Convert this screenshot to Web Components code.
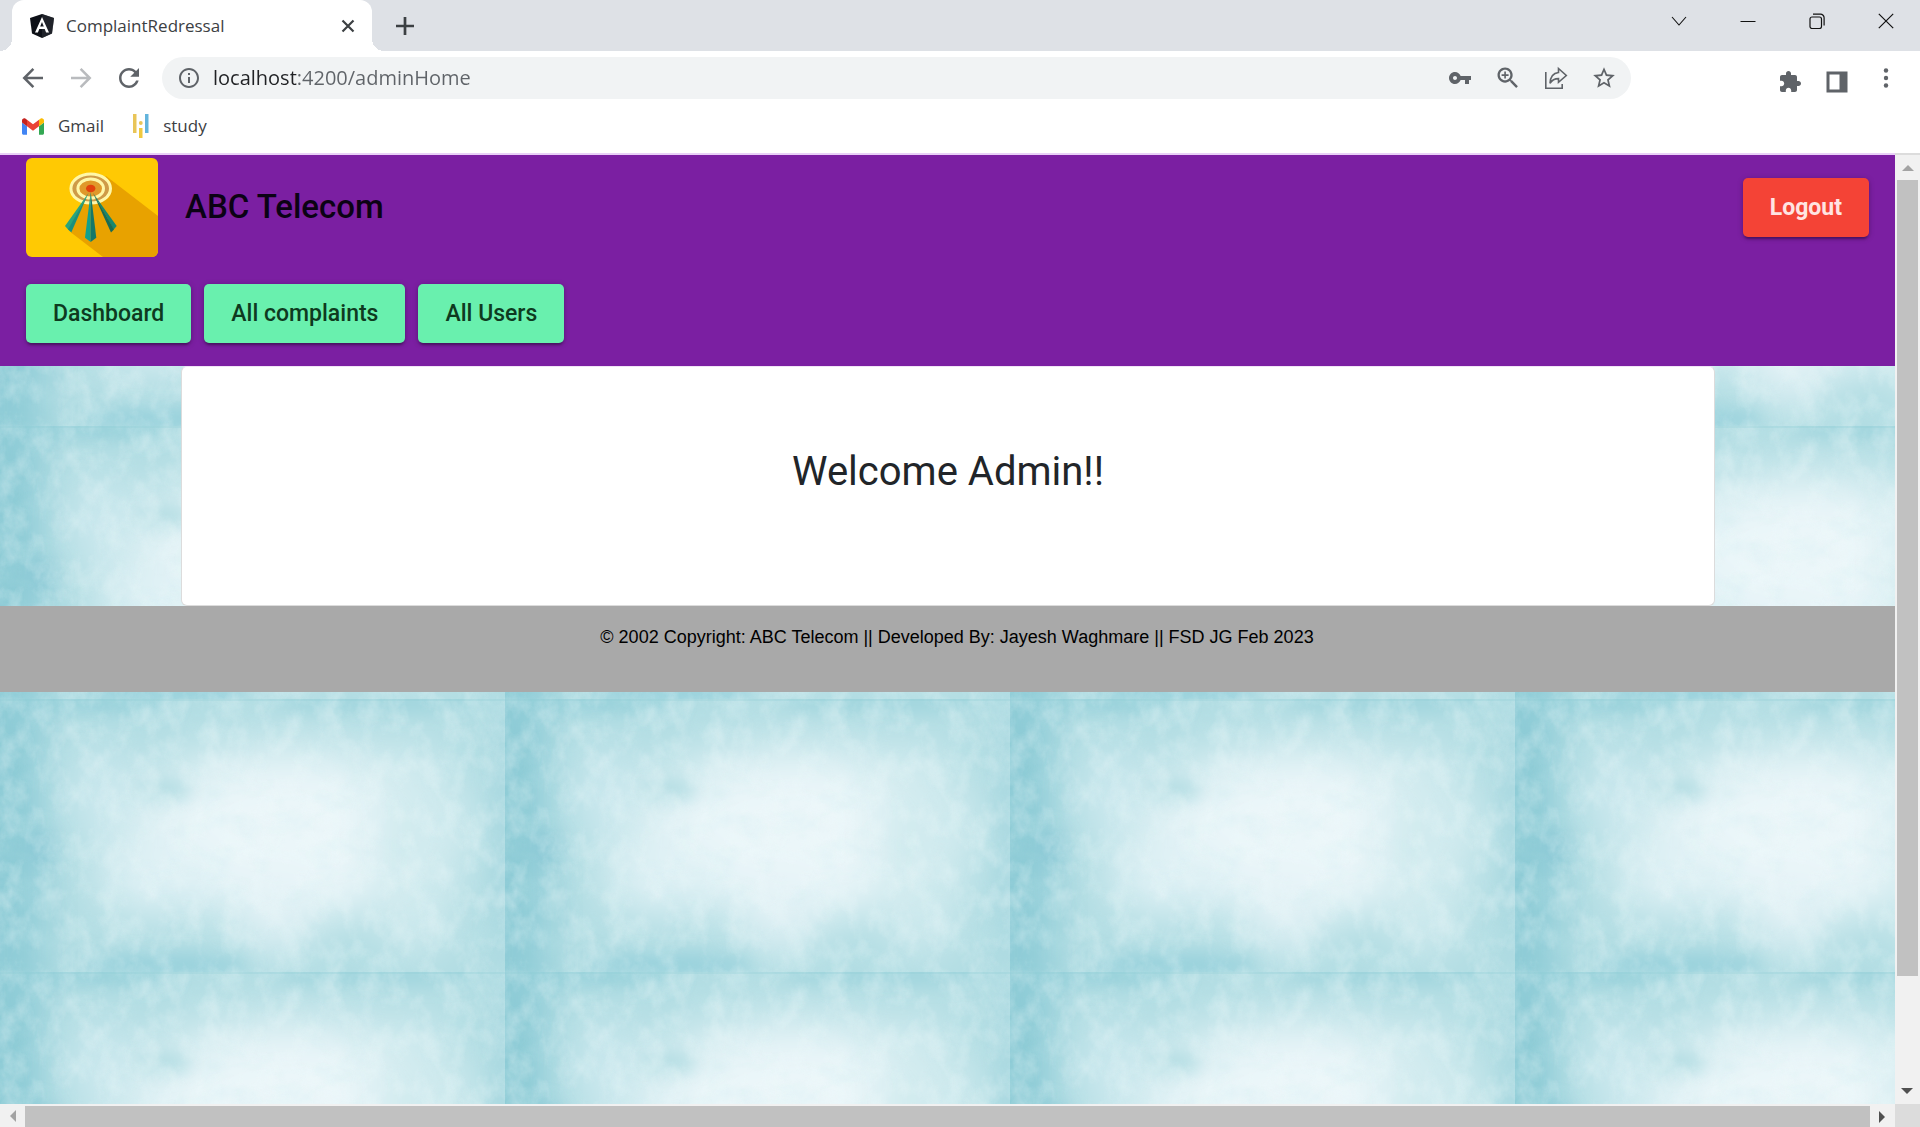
<!DOCTYPE html>
<html lang="en">
<head>
<meta charset="utf-8">
<title>ComplaintRedressal</title>
<style>
  html, body { margin: 0; height: 100%; }
  body { font-family: "Open Sans", "Noto Sans", sans-serif; color: #3c4043; overflow: hidden; }
</style>
</head>
<body>
<browser-window>
  <tab-strip slot="tabs"></tab-strip>
  <nav-toolbar slot="toolbar"></nav-toolbar>
  <bookmark-bar slot="bookmarks"></bookmark-bar>
  <telecom-app slot="page">
    <app-header slot="header"></app-header>
    <welcome-card>Welcome Admin!!</welcome-card>
    <app-footer slot="footer">© 2002 Copyright: ABC Telecom || Developed By: Jayesh Waghmare || FSD JG Feb 2023</app-footer>
  </telecom-app>
</browser-window>

<script>
const define = (name, html) => {
  const template = document.createElement('template');
  template.innerHTML = html;
  customElements.define(name, class extends HTMLElement {
    constructor() {
      super();
      this.attachShadow({ mode: 'open' }).append(template.content.cloneNode(true));
    }
  });
};

const resetButton = `
  button { all: unset; box-sizing: border-box; display: grid; place-content: center; cursor: pointer; }
  svg { display: block; }
`;

define('browser-window', `
  <style>
    :host { display: flex; flex-direction: column; height: 100vh; background: #fff; }
    main { flex: 1; min-height: 0; display: grid; grid-template-columns: minmax(0, 1fr) 25px; grid-template-rows: minmax(0, 1fr) 23px; }
    .corner { background: #dcdcdc; }
  </style>
  <slot name="tabs"></slot>
  <slot name="toolbar"></slot>
  <slot name="bookmarks"></slot>
  <main>
    <slot name="page"></slot>
    <scroll-bar class="vertical"></scroll-bar>
    <scroll-bar class="horizontal"></scroll-bar>
    <div class="corner"></div>
  </main>
`);

define('scroll-bar', `
  <style>
    :host { display: flex; background: #f1f1f1; overflow: hidden; }
    :host(.vertical) { flex-direction: column; border-top: 2px solid #dcdcdc; }
    .arrow { flex: none; display: grid; place-items: center; width: 25px; height: 25px; }
    .arrow::before { content: ""; border: 6px solid transparent; border-top-width: 0; border-bottom: 6px solid #a3a3a3; }
    .end::before { border-bottom-color: #505050; }
    :host(.vertical) .end { transform: rotate(180deg); }
    :host(.horizontal) .arrow { transform: rotate(-90deg); }
    :host(.horizontal) .end { transform: rotate(90deg); }
    .track { flex: 1; display: flex; }
    .thumb { background: #c1c1c1; }
    :host(.vertical) .track { flex-direction: column; }
    :host(.vertical) .thumb { height: 88.5%; margin: 0 2px; }
    :host(.horizontal) .thumb { width: 100%; margin-top: 2px; }
  </style>
  <div class="arrow"></div>
  <div class="track"><div class="thumb"></div></div>
  <div class="arrow end"></div>
`);

define('tab-strip', `
  <style>
    ${resetButton}
    :host { display: flex; height: 51px; background: #dee1e6; }
    .tab { position: relative; display: flex; align-items: center; gap: 12px; box-sizing: border-box; width: 360px; margin-left: 12px; padding: 0 12px 0 18px; background: #fff; border-radius: 12px 12px 0 0; font-size: 17px; }
    .tab::before, .tab::after { content: ""; position: absolute; bottom: 0; width: 12px; height: 12px; }
    .tab::before { right: 100%; background: radial-gradient(circle at 0 0, transparent 12px, #fff 12px); }
    .tab::after { left: 100%; background: radial-gradient(circle at 100% 0, transparent 12px, #fff 12px); }
    .title { flex: 1; line-height: 24px; }
    .close, .add { width: 24px; }
    .add { margin-left: 21px; }
    .controls { display: flex; gap: 45px; margin-left: auto; padding: 9px 22px 0 0; }
    .controls button { width: 24px; height: 24px; }
  </style>
  <div class="tab">
    <svg width="24" height="24" viewBox="0 0 24 24" aria-hidden="true">
      <path fill="#0d1017" d="M12 0 24 4 22 19.500 12 24 2 19.500 0 4z"/>
      <path fill="#2b2f36" d="M12 0 24 4 22 19.500 12 24z" opacity=".6"/>
      <path fill="#fff" d="M12 3 19 18.500h-2.900l-1.400-3.400H9.300L7.900 18.500H5zM12 8 10.200 12.500h3.600z"/>
    </svg>
    <span class="title">ComplaintRedressal</span>
    <button class="close" aria-label="Close tab"><svg width="14" height="14" viewBox="0 0 14 14"><path d="M1.500 1.500 12.500 12.500M12.500 1.500 1.500 12.500" stroke="#3c4043" stroke-width="2.200"/></svg></button>
  </div>
  <button class="add" aria-label="New tab"><svg width="18" height="18" viewBox="0 0 18 18"><path d="M9 0v18M0 9h18" stroke="#3c4043" stroke-width="2.700"/></svg></button>
  <div class="controls">
    <button aria-label="Search tabs"><svg width="16" height="16" viewBox="0 0 16 16"><path d="M1 4 8 12 15 4" fill="none" stroke="#111" stroke-width="1.100"/></svg></button>
    <button aria-label="Minimize"><svg width="16" height="16" viewBox="0 0 16 16"><path d="M.500 8.500h15" stroke="#111"/></svg></button>
    <button aria-label="Restore"><svg width="16" height="16" viewBox="0 0 16 16" fill="none" stroke="#111" stroke-width="1.200"><rect x="1" y="4" width="11.500" height="11.500" rx="2"/><path d="M4 1.200h7.500a3.600 3.600 0 0 1 3.600 3.600v7.700"/></svg></button>
    <button aria-label="Close window"><svg width="16" height="16" viewBox="0 0 16 16"><path d="M.800.800 15.200 15.200M15.200.800.800 15.200" stroke="#111" stroke-width="1.200"/></svg></button>
  </div>
`);

define('nav-toolbar', `
  <style>
    ${resetButton}
    :host { display: flex; align-items: center; gap: 18px; padding: 6px 24px 8px 18px; color: #5f6368; }
    button { flex: none; width: 24px; height: 24px; }
    .nav { width: 30px; height: 30px; }
    .forward { color: #b9bbbe; }
    form { flex: 1; display: flex; align-items: center; gap: 24px; box-sizing: border-box; height: 42px; margin: 0; padding: 0 15px; border-radius: 21px; background: #f1f3f4; }
    .address { flex: 1; display: flex; align-items: center; gap: 12px; }
    input { flex: 1; min-width: 0; height: 32px; padding: 0; border: 0; outline: 0; font: 400 20px/32px "Open Sans", "Noto Sans", sans-serif; color: transparent; background: linear-gradient(90deg, #202124 85px, #5f6368 85px); background-clip: text; -webkit-background-clip: text; }
    .tools { display: flex; align-items: center; gap: 23px; margin-left: 129px; }
    .low { margin-top: 7px; }
  </style>
  <button class="nav" aria-label="Back"><svg width="30" height="30" viewBox="0 0 24 24"><path d="M20 12H5M12.300 4.700 5 12l7.300 7.300" fill="none" stroke="currentColor" stroke-width="2"/></svg></button>
  <button class="nav forward" aria-label="Forward"><svg width="30" height="30" viewBox="0 0 24 24"><path d="M4 12h15M11.700 4.700 19 12l-7.300 7.300" fill="none" stroke="currentColor" stroke-width="2"/></svg></button>
  <button class="nav" aria-label="Reload"><svg width="30" height="30" viewBox="0 0 24 24" fill="currentColor"><path d="M17.650 6.350C16.200 4.900 14.210 4 12 4c-4.420 0-7.990 3.580-7.990 8s3.570 8 7.990 8c3.730 0 6.840-2.550 7.730-6h-2.080c-.820 2.330-3.040 4-5.650 4-3.310 0-6-2.690-6-6s2.690-6 6-6c1.660 0 3.140.690 4.220 1.780L13 11h7V4l-2.350 2.350z"/></svg></button>
  <form>
    <label class="address" aria-label="Address">
      <svg width="24" height="24" viewBox="0 0 24 24" fill="currentColor"><path d="M11 7h2v2h-2zm0 4h2v6h-2zm1-9C6.480 2 2 6.480 2 12s4.480 10 10 10 10-4.480 10-10S17.520 2 12 2zm0 18c-4.410 0-8-3.590-8-8s3.590-8 8-8 8 3.590 8 8-3.590 8-8 8z"/></svg>
      <input type="text" value="localhost:4200/adminHome" aria-label="Address" spellcheck="false">
    </label>
    <button type="button" aria-label="Passwords"><svg width="24" height="24" viewBox="0 0 24 24" fill="currentColor"><path d="M12.650 10C11.830 7.670 9.610 6 7 6c-3.310 0-6 2.690-6 6s2.690 6 6 6c2.610 0 4.830-1.670 5.650-4H17v4h4v-4h2v-4H12.650zM7 14c-1.100 0-2-.900-2-2s.900-2 2-2 2 .900 2 2-.900 2-2 2z"/></svg></button>
    <button type="button" aria-label="Zoom"><svg width="28" height="28" viewBox="0 0 24 24" fill="currentColor"><path d="M15.500 14h-.790l-.280-.270C15.410 12.590 16 11.110 16 9.500 16 5.910 13.090 3 9.500 3S3 5.910 3 9.500 5.910 16 9.500 16c1.610 0 3.090-.590 4.230-1.570l.270.280v.790l5 4.990L20.490 19l-4.990-5zm-6 0C7.010 14 5 11.990 5 9.500S7.010 5 9.500 5 14 7.010 14 9.500 11.990 14 9.500 14zm.700-7.500H8.800v2.300H6.500v1.400h2.300v2.300h1.400v-2.300h2.300V8.800h-2.300z"/></svg></button>
    <button type="button" aria-label="Share"><svg width="24" height="24" viewBox="0 0 24 24" fill="none" stroke="currentColor" stroke-width="1.600"><path d="M1.800 6v16.200h16.400V18"/><path d="M14.500 2.500 22.300 9.500 14.500 16.300V12.600C11 12.600 8 14 6 17.300 6.300 11 9.500 7 14.500 6.500z"/></svg></button>
    <button type="button" aria-label="Bookmark"><svg width="26" height="26" viewBox="0 0 24 24" fill="currentColor"><path d="M22 9.240l-7.190-.620L12 2 9.190 8.630 2 9.240l5.460 4.730L5.820 21 12 17.270 18.180 21l-1.630-7.030L22 9.240zM12 15.400l-3.760 2.270 1-4.280-3.320-2.880 4.380-.380L12 6.100l1.710 4.040 4.380.380-3.320 2.880 1 4.280L12 15.400z"/></svg></button>
  </form>
  <div class="tools">
    <button class="low" aria-label="Extensions"><svg width="24" height="24" viewBox="0 0 24 24" fill="currentColor"><path d="M20.500 11H19V7c0-1.100-.900-2-2-2h-4V3.500C13 2.120 11.880 1 10.500 1S8 2.120 8 3.500V5H4c-1.100 0-1.990.900-1.990 2v3.800H3.500c1.490 0 2.700 1.210 2.700 2.700s-1.210 2.700-2.700 2.700H2V20c0 1.100.900 2 2 2h3.800v-1.500c0-1.490 1.210-2.700 2.700-2.700 1.490 0 2.700 1.210 2.700 2.700V22H17c1.100 0 2-.900 2-2v-4h1.500c1.380 0 2.500-1.120 2.500-2.500S21.880 11 20.500 11z"/></svg></button>
    <button class="low" aria-label="Side panel"><svg width="22" height="22" viewBox="0 0 22 22"><path fill="currentColor" fill-rule="evenodd" d="M.500.500h21v21H.500zM3.500 3.500v15h10v-15z"/></svg></button>
    <button aria-label="Menu"><svg width="24" height="24" viewBox="0 0 24 24" fill="currentColor"><circle cx="14" cy="4.500" r="2.200"/><circle cx="14" cy="12" r="2.200"/><circle cx="14" cy="19.500" r="2.200"/></svg></button>
  </div>
`);

define('bookmark-bar', `
  <style>
    :host { display: flex; align-items: center; gap: 28px; height: 38px; padding: 0 22px 8px; }
    a { display: flex; align-items: center; gap: 14px; font-size: 17px; line-height: 24px; color: #3c4043; text-decoration: none; }
  </style>
  <a href="#gmail">
    <svg width="22" height="17" viewBox="52 42 88 66" aria-hidden="true">
      <path fill="#4285f4" d="M58 108h14V74L52 59v43c0 3.320 2.690 6 6 6"/>
      <path fill="#34a853" d="M120 108h14c3.320 0 6-2.690 6-6V59l-20 15"/>
      <path fill="#fbbc04" d="M120 48v26l20-15v-8c0-7.420-8.470-11.650-14.400-7.200"/>
      <path fill="#ea4335" d="M72 74V48l24 18 24-18v26L96 92"/>
      <path fill="#c5221f" d="M52 51v8l20 15V48l-5.600-4.200c-5.940-4.450-14.400-.220-14.400 7.200"/>
    </svg>Gmail</a>
  <a href="#study">
    <svg width="17" height="24" viewBox="0 0 17 24" aria-hidden="true">
      <path fill="#e9c558" d="M1 0h3.500v19H1z"/><path fill="#63b4dc" d="M13 0h3.500v19H13z"/>
      <path fill="#f0c93f" d="M7 14h3.500v10H7z"/><circle cx="8.800" cy="9" r="1.900" fill="#e9c558"/>
    </svg>study</a>
`);

/* One repeat of the watercolour paper: a pale centre, teal edges and a fine grain. */
const paperTile = `<svg xmlns="http://www.w3.org/2000/svg" width="505" height="273" viewBox="0 0 505 273">
  <defs>
    <filter id="b" x="-50%" y="-50%" width="200%" height="200%"><feGaussianBlur stdDeviation="22"/></filter>
    <filter id="s" x="-50%" y="-50%" width="200%" height="200%"><feGaussianBlur stdDeviation="9"/></filter>
    <filter id="n" x="0" y="0" width="100%" height="100%"><feTurbulence type="fractalNoise" baseFrequency=".05 .035" numOctaves="4" seed="7" stitchTiles="stitch"/><feColorMatrix values="0 0 0 0 .86  0 0 0 0 .95  0 0 0 0 .96  2.400 0 0 0 -1"/></filter>
    <filter id="d" x="0" y="0" width="100%" height="100%"><feTurbulence type="fractalNoise" baseFrequency=".03 .045" numOctaves="4" seed="21" stitchTiles="stitch"/><feColorMatrix values="0 0 0 0 .52  0 0 0 0 .79  0 0 0 0 .82  0 2 0 0 -.900"/></filter>
  </defs>
  <rect width="505" height="273" fill="#b2dde3"/>
  <rect x="-30" y="-40" width="72" height="350" fill="#8ccbd6" filter="url(#b)"/>
  <g filter="url(#b)">
    <ellipse cx="290" cy="130" rx="185" ry="92" fill="#d7edf1"/>
    <ellipse cx="290" cy="140" rx="130" ry="75" fill="#ebf6f9"/>
    <ellipse cx="160" cy="180" rx="65" ry="36" fill="#dff1f5"/>
    <ellipse cx="100" cy="95" rx="32" ry="48" fill="#cbe8ee"/>
    <ellipse cx="275" cy="215" rx="35" ry="42" fill="#e3f2f6"/>
    <ellipse cx="415" cy="150" rx="45" ry="110" fill="#d1ebef"/>
  </g>
  <g filter="url(#s)">
    <ellipse cx="165" cy="90" rx="27" ry="10" fill="#b0dce2"/>
    <ellipse cx="90" cy="4" rx="85" ry="8" fill="#90ced8"/>
    <ellipse cx="380" cy="3" rx="105" ry="8" fill="#9bd3dc"/>
    <ellipse cx="165" cy="266" rx="85" ry="10" fill="#95d0db"/>
    <ellipse cx="40" cy="150" rx="14" ry="20" fill="#8bc9d6"/>
    <ellipse cx="500" cy="130" rx="8" ry="150" fill="#a8d8e0"/>
    <ellipse cx="6" cy="120" rx="12" ry="100" fill="#8ccbd5"/>
  </g>
  <rect width="505" height="273" filter="url(#n)" opacity=".350"/>
  <rect width="505" height="273" filter="url(#d)" opacity=".220"/>
  <path d="M0 1h505" stroke="#8ccad4" stroke-width="2" opacity=".250"/>
</svg>`;

define('telecom-app', `
  <style>
    :host { display: block; overflow: hidden; border-top: 2px solid #e9cff7; background: url("data:image/svg+xml,${encodeURIComponent(paperTile)}") 0 0 / 505px 273px border-box; font-family: Roboto, sans-serif; }
  </style>
  <slot name="header"></slot>
  <slot></slot>
  <slot name="footer"></slot>
`);

define('app-button', `
  <style>
    :host { display: block; }
    button { display: block; box-sizing: border-box; height: 59px; margin: 0; padding: 0 27px; border: 0; border-radius: 5px; font: 500 23px/59px Roboto, sans-serif; color: #0e3a20; background: #69f0ae; box-shadow: 0 4px 2px -2px rgba(0,0,0,.2), 0 2px 3px rgba(0,0,0,.14), 0 1px 6px rgba(0,0,0,.2); cursor: pointer; }
    :host([tone="warn"]) button { background: #f44336; color: #ffe4e2; font-weight: 700; }
  </style>
  <button type="button"><slot></slot></button>
`);

define('app-header', `
  <style>
    :host { display: flex; flex-direction: column; gap: 27px; padding: 3px 26px 23px; background: #7b1fa2; }
    .brand { display: flex; align-items: center; gap: 27px; }
    .brand svg { flex: none; border-radius: 6px; }
    .name { flex: 1; padding-bottom: 2px; font-size: 33px; line-height: 42px; font-weight: 500; color: #0b0214; }
    nav { display: flex; gap: 13px; }
  </style>
  <div class="brand">
    <svg width="132" height="99" viewBox="0 0 132 99" role="img" aria-label="Tower">
      <path fill="#ffc903" d="M0 0h132v99H0z"/>
      <path fill="#e8a200" d="M80 18 132 58v41H77L45 74.500 60 40z"/>
      <ellipse cx="64.700" cy="30.500" rx="20" ry="14.800" fill="#cf9b48"/>
      <ellipse cx="64.700" cy="30.500" rx="19.800" ry="14.600" fill="none" stroke="#fff7a8" stroke-width="3"/>
      <ellipse cx="64.700" cy="30.500" rx="12.800" ry="9.600" fill="#e0982a" stroke="#fff7a8" stroke-width="3"/>
      <path fill="#2aa57c" d="M62.500 35 39 68l3.500 4z"/><path fill="#1b8f7c" d="M62.500 35 42 71.500l3.300 3z"/>
      <path fill="#12a08d" d="M64.700 34 59 79.700l5.700 4.300z"/><path fill="#157768" d="M64.700 34 70.300 79.700 64.700 84z"/>
      <path fill="#17876f" d="M67 35 90.700 68l-3 3.500z"/><path fill="#196b54" d="M67 35 88 71.500l-3 3z"/>
      <ellipse cx="64.700" cy="30.500" rx="4.700" ry="3.800" fill="#e2420c"/>
    </svg>
    <span class="name">ABC Telecom</span>
    <app-button tone="warn">Logout</app-button>
  </div>
  <nav>
    <app-button>Dashboard</app-button>
    <app-button>All complaints</app-button>
    <app-button>All Users</app-button>
  </nav>
`);

define('welcome-card', `
  <style>
    :host { display: block; margin: 0 180px 0 181px; padding: 80px 24px 108px; border: 1px solid #dcdcdc; border-top-color: #f0e3f6; border-radius: 6px; background: #fff; }
    h1 { margin: 0; font-size: 40px; line-height: 50px; font-weight: 400; text-align: center; color: #212529; }
  </style>
  <h1><slot></slot></h1>
`);

define('app-footer', `
  <style>
    :host { display: block; padding: 19px 0 43px 19px; background: #a9a9a9; font-family: "Liberation Sans", Arial, sans-serif; font-size: 18px; line-height: 24px; text-align: center; color: #000; }
  </style>
  <slot></slot>
`);
</script>
</body>
</html>
